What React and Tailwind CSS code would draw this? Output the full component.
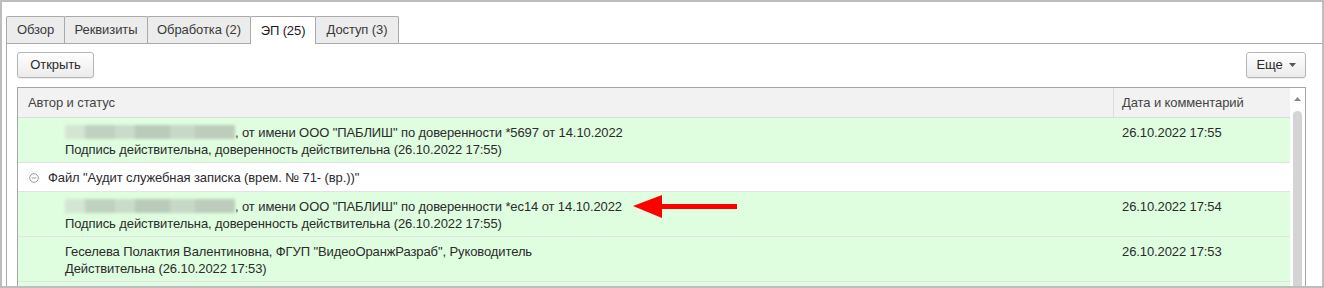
import React from 'react';

const tabs = [
  { label: 'Обзор', w: 'w-[59px]' },
  { label: 'Реквизиты', w: 'w-[84px]' },
  { label: 'Обработка (2)', w: 'w-[104px]' },
  { label: 'ЭП (25)', w: 'w-[66px]', active: true },
  { label: 'Доступ (3)', w: 'w-[84px]' },
];

function Blurred() {
  return (
    <span className="inline-flex h-[14px] w-[170px] align-[-2px] blur-[1.5px]">
      <span className="w-[20px] bg-[#d3e6d3]" />
      <span className="w-[30px] bg-[#bfd2bf]" />
      <span className="w-[20px] bg-[#c9dcc9]" />
      <span className="w-[35px] bg-[#b9cbb9]" />
      <span className="w-[25px] bg-[#c6d8c6]" />
      <span className="w-[40px] bg-[#bccdbc]" />
    </span>
  );
}

function SignRow({ line1, line2, date, arrow }) {
  return (
    <div className="relative flex border-b border-[#e3e3e3] bg-[#dffddf]">
      <div className="flex-1 pl-[47px] pt-[6px] pb-[4px] leading-[17px]">
        <div>{line1}</div>
        <div>{line2}</div>
      </div>
      <div className="w-[177px] pl-[9px] pt-[6px] leading-[17px]">{date}</div>
      {arrow && (
        <svg className="absolute left-[614px] top-[2px]" width="108" height="26" viewBox="0 0 108 26">
          <polygon points="1,12 30,1 30,24" fill="#f00" />
          <rect x="28" y="10" width="77" height="5" fill="#f00" />
        </svg>
      )}
    </div>
  );
}

export default function App() {
  return (
    <div className="w-[1324px] h-[288px] overflow-hidden border-2 border-[#bdbdbd] bg-white text-[13px] tracking-[-0.1px] text-[#2b2b2b] font-['Liberation_Sans',Arial,sans-serif]">
      <div className="pl-[4px] pt-[14px] flex flex-col h-full">
        <div className="flex items-end border-b border-[#aaa] h-[28px]">
          {tabs.map((t) => (
            <div
              key={t.label}
              className={`${t.w} -ml-px first:ml-0 flex items-center justify-center border border-b-0 border-[#aaa] rounded-t-[2px] ${
                t.active ? 'h-[28px] -mb-px bg-white text-[#1a1a1a]' : 'h-[27px] bg-[#ececec] text-[#3a3a3a]'
              }`}
            >
              {t.label}
            </div>
          ))}
        </div>
        <div className="flex-1 border-l border-[#aaa] pl-[10px] pr-[16px] pt-[8px]">
          <div className="flex justify-between">
            <button className="h-[26px] w-[77px] rounded-[3px] border border-[#b5b5b5] bg-gradient-to-b from-white to-[#ebebeb] text-[#2b2b2b] shadow-[0_1px_1px_rgba(0,0,0,0.08)]">
              Открыть
            </button>
            <button className="h-[26px] w-[60px] rounded-[3px] border border-[#b5b5b5] bg-gradient-to-b from-white to-[#ebebeb] text-[#2b2b2b] flex items-center justify-center gap-[6px] shadow-[0_1px_1px_rgba(0,0,0,0.08)]">
              Еще
              <svg width="7" height="4" viewBox="0 0 7 4">
                <polygon points="0,0 7,0 3.5,4" fill="#555" />
              </svg>
            </button>
          </div>
          <div className="mt-[9px] flex border border-[#a5a5a5] border-b-0 h-[200px]">
            <div className="flex-1 flex flex-col">
              <div className="flex h-[30px] border-b border-[#dcdcdc] bg-[#f2f2f2] items-center">
                <div className="flex-1 pl-[10px] text-[#444]">Автор и статус</div>
                <div className="w-[177px] h-full flex items-center border-l border-[#dcdcdc] pl-[8px] text-[#444]">
                  Дата и комментарий
                </div>
              </div>
              <SignRow
                line1={<><Blurred />, от имени ООО "ПАБЛИШ" по доверенности *5697 от 14.10.2022</>}
                line2="Подпись действительна, доверенность действительна (26.10.2022 17:55)"
                date="26.10.2022 17:55"
              />
              <div className="flex items-center h-[29px] pt-px border-b border-[#e3e3e3] bg-white pl-[11px]">
                <svg width="10" height="10" viewBox="0 0 10 10" className="mr-[9px]">
                  <circle cx="5" cy="5" r="4.3" fill="none" stroke="#999" strokeWidth="1" />
                  <line x1="2.8" y1="5" x2="7.2" y2="5" stroke="#999" strokeWidth="1" />
                </svg>
                Файл "Аудит служебная записка (врем. № 71- (вр.))"
              </div>
              <SignRow
                line1={<><Blurred />, от имени ООО "ПАБЛИШ" по доверенности *ec14 от 14.10.2022</>}
                line2="Подпись действительна, доверенность действительна (26.10.2022 17:55)"
                date="26.10.2022 17:54"
                arrow
              />
              <SignRow
                line1={'Геселева Полактия Валентиновна, ФГУП "ВидеоОранжРазраб", Руководитель'}
                line2="Действительна (26.10.2022 17:53)"
                date="26.10.2022 17:53"
              />
              <div className="flex-1 bg-[#dffddf]" />
            </div>
            <div className="w-[15px] flex flex-col items-center bg-white">
              <svg width="7" height="4" viewBox="0 0 7 4" className="mt-[9px]">
                <polygon points="0,4 7,4 3.5,0" fill="#888" />
              </svg>
              <div className="mt-[10px] w-[9px] flex-1 rounded-t-[5px] bg-[#d4d4d4]" />
            </div>
          </div>
        </div>
      </div>
    </div>
  );
}
